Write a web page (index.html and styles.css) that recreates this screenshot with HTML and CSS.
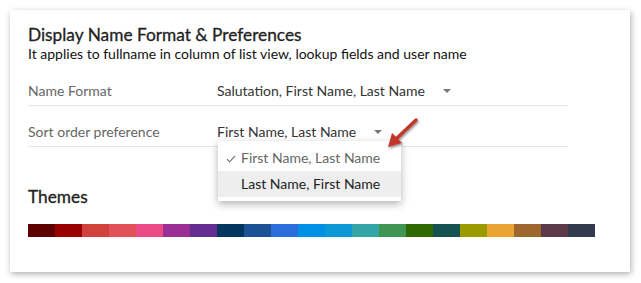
FILE: index.html
```html
<html>
  <head>
    <title>Display Name Format &amp; Preferences</title>
    <meta name="viewport" content="width=device-width, initial-scale=1" />
    <link rel="stylesheet" href="styles.css">
  </head>
  <body>
    <main class="card">
      <h1>Display Name Format &amp; Preferences</h1>
      <p class="hint">It applies to fullname in column of list view, lookup fields and user name</p>

      <div class="prefs">
        <div class="row">
          <div class="label">Name Format</div>
          <div class="select">
            <span class="value">Salutation, First Name, Last Name</span>
            <span class="caret"></span>
          </div>
        </div>
        <div class="row">
          <div class="label">Sort order preference</div>
          <div class="select open">
            <span class="value">First Name, Last Name</span>
            <span class="caret"></span>
            <ul class="menu">
              <li class="checked">
                <svg class="tick" width="10" height="8" viewBox="0 0 10 8"><path d="M1 4.2 L3.6 6.8 L9 1.2" fill="none" stroke="#666" stroke-width="1.1"/></svg>
                First Name, Last Name
              </li>
              <li class="hover">Last Name, First Name</li>
            </ul>
          </div>
        </div>
      </div>

      <h2>Themes</h2>
      <div class="themes" id="themes"></div>

      <svg class="pointer" width="44" height="40" viewBox="0 0 44 40">
        <defs>
          <filter id="sh" x="-30%" y="-30%" width="160%" height="160%">
            <feDropShadow dx="1" dy="1.5" stdDeviation="1.2" flood-color="#000" flood-opacity="0.45"/>
          </filter>
        </defs>
        <g filter="url(#sh)">
          <path d="M36 6 L16 25" stroke="#c1392b" stroke-width="3.4" stroke-linecap="round"/>
          <path d="M8 33 L12 19 L22 29 Z" fill="#c1392b"/>
        </g>
      </svg>
    </main>

    <script>
      const colors = [
        '#5e0000', '#9b0000', '#d2423d', '#e05158', '#ec4a87', '#9a3096', '#662d91',
        '#003660', '#1c5196', '#2b6fdc', '#0090e4', '#0b98d4', '#34a5a5', '#3f9652',
        '#2f6a00', '#155352', '#9b9b00', '#eaa431', '#9d672d', '#5c3848', '#333a4e'
      ];
      const themes = document.getElementById('themes');
      colors.forEach(c => {
        const swatch = document.createElement('span');
        swatch.className = 'swatch';
        swatch.style.backgroundColor = c;
        themes.append(swatch);
      });
    </script>
  </body>
</html>
```

FILE: styles.css
```css
body {
  margin: 0;
  background-color: #fff;
  font-family: Lato, 'Open Sans', sans-serif;
  color: #333;
}

.card {
  position: relative;
  margin: 10px;
  width: 620px;
  height: 262px;
  box-sizing: border-box;
  padding: 15px 18px 0 18px;
  background-color: #fff;
  box-shadow: 1px 2px 6px rgba(0, 0, 0, 0.32);
}

.card h1 {
  margin: 0;
  font-size: 17.3px;
  font-weight: 400;
  line-height: 20px;
  color: #222;
  -webkit-text-stroke: 0.3px #222;
}

.card .hint {
  margin: 0;
  font-size: 14px;
  line-height: 18px;
  color: #111;
}

.prefs {
  width: 540px;
  margin-top: 2px;
}

.row {
  display: flex;
  align-items: flex-start;
  height: 40px;
  border-bottom: 1px solid #e5e5e5;
  font-size: 14px;
  line-height: 18px;
}

.row .label,
.row .select {
  margin-top: 17px;
}

.row .label {
  width: 189px;
  color: #666;
}

.select {
  position: relative;
  display: flex;
  align-items: center;
  color: #333;
}

.select .caret {
  width: 0;
  height: 0;
  margin-left: 18px;
  border-left: 4px solid transparent;
  border-right: 4px solid transparent;
  border-top: 4px solid #777;
}

.menu {
  position: absolute;
  left: 1px;
  top: 18px;
  width: 183px;
  margin: 0;
  padding: 4px 0;
  list-style: none;
  background-color: #fff;
  box-shadow: 0 3px 8px rgba(0, 0, 0, 0.3);
}

.menu li {
  height: 26px;
  line-height: 26px;
  padding-left: 23px;
  font-size: 14px;
  color: #222;
  position: relative;
}

.menu li.checked {
  color: #666;
}

.menu .tick {
  position: absolute;
  left: 8px;
  top: 10px;
}

.menu li.hover {
  background-color: #eeeeee;
}

.card h2 {
  margin: 40px 0 0 0;
  font-size: 17.3px;
  font-weight: 400;
  line-height: 20px;
  color: #222;
  -webkit-text-stroke: 0.3px #222;
}

.themes {
  display: flex;
  margin-top: 17px;
}

.themes .swatch {
  width: 27px;
  height: 13px;
}

.pointer {
  position: absolute;
  left: 370px;
  top: 104px;
}
```
